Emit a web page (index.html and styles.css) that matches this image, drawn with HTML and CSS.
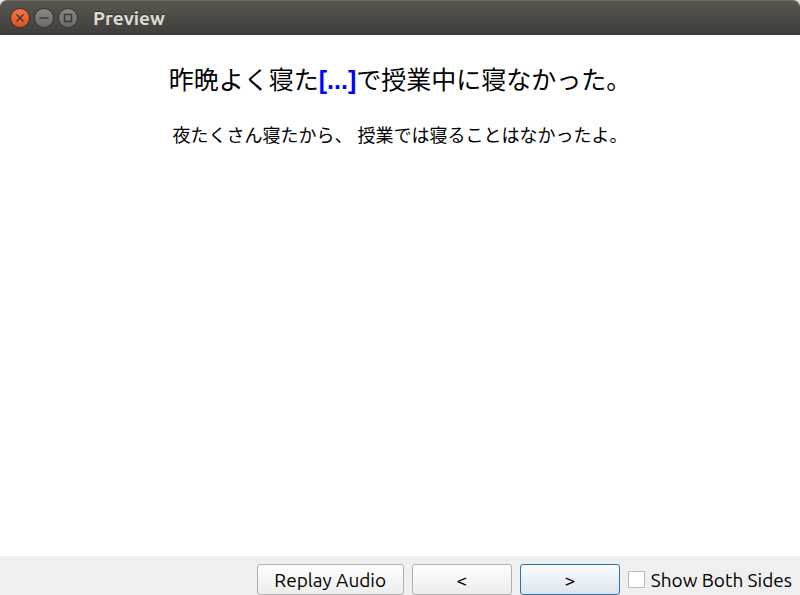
FILE: index.html
```html
<!DOCTYPE html>
<html lang="ja">
<head>
<meta charset="utf-8">
<title>Preview</title>
<link rel="stylesheet" href="styles.css">
</head>
<body>
<div class="window">
  <header class="titlebar" lang="en">
    <div class="controls">
      <button class="control close" type="button" aria-label="Close">
        <svg viewBox="0 0 18 18"><path d="M5.5 5.5l7 7M12.500 5.5l-7 7"/></svg>
      </button>
      <button class="control" type="button" aria-label="Minimize">
        <svg viewBox="0 0 18 18"><path d="M4.500 9h9"/></svg>
      </button>
      <button class="control" type="button" aria-label="Maximize">
        <svg viewBox="0 0 18 18"><path d="M5.500 5.500h7v7h-7z"/></svg>
      </button>
    </div>
    <h1 class="title">Preview</h1>
  </header>
  <main class="card">
    <p class="sentence">昨晩よく寝た<b class="cloze">[...]</b>で授業中に寝なかった。</p>
    <p class="hint">夜たくさん寝たから、 授業では寝ることはなかったよ。</p>
  </main>
  <footer class="toolbar" lang="en">
    <button class="button replay" type="button">Replay Audio</button>
    <button class="button" type="button">&lt;</button>
    <button class="button default" type="button">&gt;</button>
    <label class="option"><input class="check" type="checkbox">Show Both Sides</label>
  </footer>
</div>
</body>
</html>
```
FILE: styles.css
```css
* {
  box-sizing: border-box;
}

body {
  margin: 0;
  background: #e2e2e2;
}

.window {
  display: flex;
  flex-direction: column;
  min-height: 100vh;
}

.titlebar {
  display: flex;
  align-items: center;
  gap: 15px;
  height: 35px;
  padding: 0 10px;
  border-top: 1px solid #6b6961;
  border-radius: 7px 7px 0 0;
  background: linear-gradient(#59574f, #3e3d39);
}

.controls {
  display: flex;
  gap: 4px;
}

.control {
  width: 20px;
  height: 20px;
  padding: 0;
  border: 1px solid #36352f;
  border-radius: 50%;
  background: linear-gradient(#8b8982, #6b6963);
  color: #3a3934;
}

.control svg {
  display: block;
  width: 18px;
  height: 18px;
  fill: none;
  stroke: currentColor;
  stroke-width: 1.4;
}

.close {
  background: linear-gradient(#f4764c, #e4501f);
}

.title {
  margin: 0;
  color: #dfdbd2;
  font: bold 19px/24px Ubuntu, "Noto Sans", sans-serif;
  text-shadow: 0 -1px #2f2e2a;
}

.card {
  flex: 1;
  padding: 27px 20px;
  background: #fff;
  color: #000;
  font-family: "Liberation Sans", "Noto Sans CJK JP", sans-serif;
  text-align: center;
}

.sentence {
  margin: 0 0 20px;
  font-size: 25px;
  line-height: 36px;
}

.cloze {
  color: #00f;
}

.hint {
  margin: 0;
  font-size: 18px;
  line-height: 36px;
}

.toolbar {
  display: flex;
  justify-content: flex-end;
  gap: 8px;
  padding: 8px 8px 0;
  background: #efefef;
  color: #000;
  font: 19px/24px Ubuntu, "Noto Sans", sans-serif;
}

.button {
  width: 100px;
  height: 31px;
  padding: 0;
  border: 1px solid #b1b1b1;
  border-radius: 3px;
  background: linear-gradient(#fefefe, #ededed);
  color: inherit;
  font: inherit;
}

.replay {
  width: 147px;
}

.default {
  border-color: #2a74a5;
  background: linear-gradient(#fbfcfd, #dce5ec);
}

.option {
  display: flex;
  align-items: center;
  gap: 6px;
}

.check {
  appearance: none;
  width: 17px;
  height: 17px;
  margin: 0;
  border: 1px solid #bababa;
  background: #fff;
}
```
